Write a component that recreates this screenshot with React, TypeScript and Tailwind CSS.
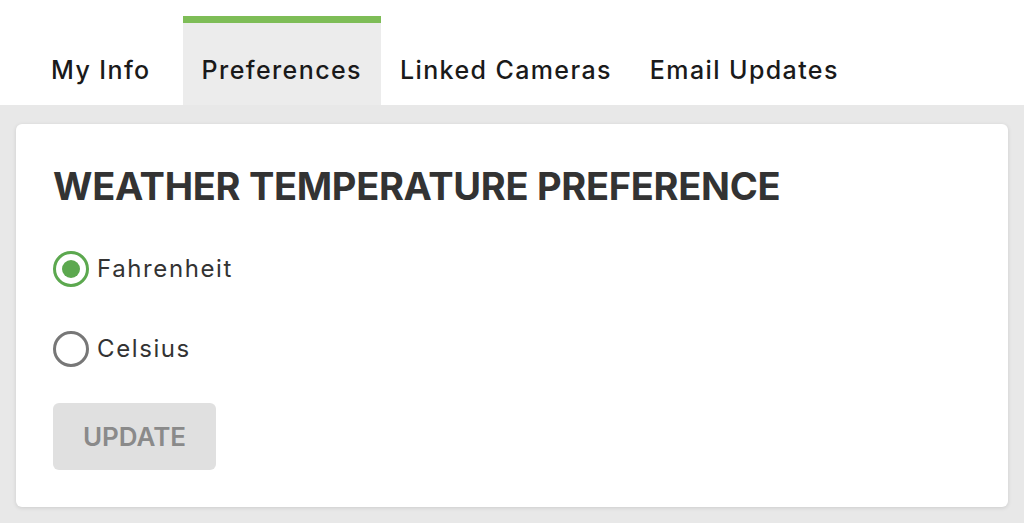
import React from "react";

export default function App() {
  const tabs = ["My Info", "Preferences", "Linked Cameras", "Email Updates"];
  return (
    <div className="w-[1024px] h-[523px] bg-[#e8e8e8] overflow-hidden" style={{ fontFamily: "Inter, 'Noto Sans', sans-serif" }}>
      <div className="h-[105px] bg-white flex items-end pl-[32px]">
        {tabs.map((t, i) => (
          <div
            key={t}
            className={
              "h-[89px] flex items-center px-[19px] pt-[13px] text-[25px] font-medium tracking-[1.4px] text-[#1a1a1a] border-t-[7px] " +
              (i === 1 ? "bg-[#ececec] border-[#7ebd57]" : "border-transparent") +
              (i === 0 ? " mr-[13px]" : "")
            }
          >
            {t}
          </div>
        ))}
      </div>
      <div className="px-[16px] pt-[19px]">
        <div className="h-[383px] bg-white rounded-[6px] shadow-[0_1px_4px_rgba(0,0,0,0.12)] px-[37px] pt-[40px]">
          <h1 className="text-[38px] font-bold text-[#333] leading-[44px] tracking-[-0.3px]">WEATHER TEMPERATURE PREFERENCE</h1>
          <div className="mt-[43px] flex items-center gap-[8px] h-[36px]">
            <span className="w-[36px] h-[36px] rounded-full border-[3px] border-[#5ca84f] flex items-center justify-center">
              <span className="w-[18px] h-[18px] rounded-full bg-[#5ca84f]" />
            </span>
            <span className="text-[24px] text-[#333] tracking-[1.6px]">Fahrenheit</span>
          </div>
          <div className="mt-[44px] flex items-center gap-[8px] h-[36px]">
            <span className="w-[36px] h-[36px] rounded-full border-[3px] border-[#777]" />
            <span className="text-[24px] text-[#333] tracking-[1.6px]">Celsius</span>
          </div>
          <button className="mt-[36px] w-[163px] h-[67px] rounded-[6px] bg-[#e0e0e0] text-[26px] font-semibold text-[#8a8a8a]">
            UPDATE
          </button>
        </div>
      </div>
    </div>
  );
}
